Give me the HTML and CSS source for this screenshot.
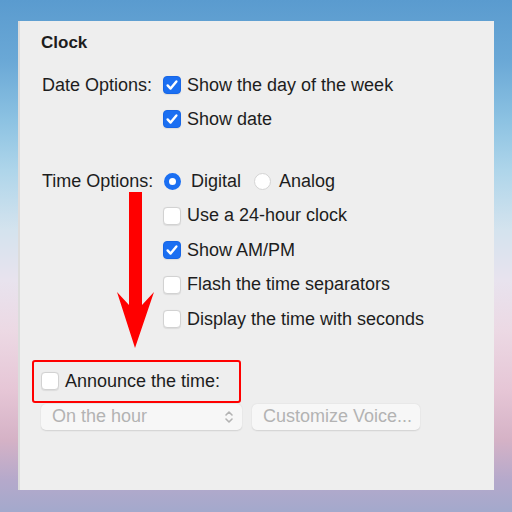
FILE: index.html
```html
<!DOCTYPE html>
<html>
<head>
<meta charset="utf-8">
<link rel="stylesheet" href="styles.css">
</head>
<body>
<div class="panel">
  <div class="title">Clock</div>
  <div class="group group-date">
    <div class="label">Date Options:</div>
    <div class="opt"><span class="cb on"><svg viewBox="0 0 18 18"><path d="M4.6 9.4 L7.6 12.6 L13.4 5.4" /></svg></span>Show the day of the week</div>
    <div class="label"></div>
    <div class="opt"><span class="cb on"><svg viewBox="0 0 18 18"><path d="M4.6 9.4 L7.6 12.6 L13.4 5.4" /></svg></span>Show date</div>
  </div>
  <div class="group group-time">
    <div class="label">Time Options:</div>
    <div class="opt"><span class="radio on"></span><span class="rtext">Digital</span><span class="radio"></span><span>Analog</span></div>
    <div class="label"></div>
    <div class="opt"><span class="cb"></span>Use a 24-hour clock</div>
    <div class="label"></div>
    <div class="opt"><span class="cb on"><svg viewBox="0 0 18 18"><path d="M4.6 9.4 L7.6 12.6 L13.4 5.4" /></svg></span>Show AM/PM</div>
    <div class="label"></div>
    <div class="opt"><span class="cb"></span>Flash the time separators</div>
    <div class="label"></div>
    <div class="opt"><span class="cb"></span>Display the time with seconds</div>
  </div>
  <div class="highlight"><span class="cb"></span>Announce the time:</div>
  <div class="controls">
    <div class="popup"><span>On the hour</span><svg class="chev" viewBox="0 0 10 16"><path d="M2 6 L5 3 L8 6 M2 10 L5 13 L8 10" /></svg></div>
    <div class="button">Customize Voice...</div>
  </div>
  <svg class="arrow" viewBox="0 0 40 160" width="40" height="160"><polygon points="12,0 25,0 25,113 37,100 18,156 0,100 12,113" /></svg>
</div>
</body>
</html>
```

FILE: styles.css
```css
html, body {
  margin: 0;
  padding: 0;
}
body {
  width: 512px;
  height: 512px;
  overflow: hidden;
  font-family: "Liberation Sans", Arial, sans-serif;
  color: #1d1d1d;
  background: linear-gradient(180deg, #5a9bcf 0px, #6aa8d6 60px, #8cc2e2 120px, #aed5ea 170px, #d4e3ee 230px, #e8e3ee 280px, #ecd9e4 330px, #e6c6d6 390px, #d5b2c6 440px, #b5a9cb 480px, #a3a9cc 512px);
  padding-top: 21px;
  box-sizing: border-box;
}
.panel {
  position: relative;
  margin-left: 18px;
  width: 476px;
  height: 469px;
  background: #eeeeee;
  border-left: 2px solid #dcdcdc;
  box-sizing: border-box;
  padding: 11px 0 0 21px;
}
.title {
  font-weight: bold;
  font-size: 17px;
  line-height: 22px;
}
.group {
  display: grid;
  grid-template-columns: 122px auto;
  font-size: 18px;
}
.group-date {
  margin-top: 14px;
  grid-auto-rows: 34px;
}
.group-time {
  margin-top: 28px;
  grid-auto-rows: 34.5px;
}
.label {
  display: flex;
  align-items: center;
  padding-left: 1px;
}
.opt {
  display: flex;
  align-items: center;
  white-space: nowrap;
}
.cb {
  width: 18px;
  height: 18px;
  box-sizing: border-box;
  border-radius: 4px;
  background: #ffffff;
  border: 1px solid #d2d2d2;
  box-shadow: 0 0.5px 1px rgba(0,0,0,0.08);
  margin-right: 6px;
  flex: none;
  display: inline-flex;
}
.cb.on {
  background: #1b6ff2;
  border-color: #1766e6;
}
.cb svg {
  width: 18px;
  height: 18px;
  margin: -1px;
  fill: none;
  stroke: #ffffff;
  stroke-width: 2.4;
  stroke-linecap: round;
  stroke-linejoin: round;
}
.radio {
  width: 17px;
  height: 17px;
  box-sizing: border-box;
  border-radius: 50%;
  background: #ffffff;
  border: 1px solid #d4d4d4;
  margin-right: 8px;
  flex: none;
}
.radio.on {
  margin-left: 1px;
  margin-right: 10px;
  background: #ffffff;
  border: 5.5px solid #1b6ff2;
}
.rtext {
  margin-right: 13px;
}
.highlight {
  margin-top: 23px;
  margin-left: -9px;
  width: 209px;
  height: 43px;
  box-sizing: border-box;
  border: 2px solid #ff0000;
  border-radius: 3px;
  display: flex;
  align-items: center;
  padding-left: 7px;
  font-size: 18px;
}
.controls {
  display: flex;
  gap: 10px;
  margin-top: 1px;
  font-size: 18px;
  color: #b3b3b3;
}
.popup, .button {
  height: 26px;
  box-sizing: border-box;
  background: #f7f7f7;
  border-radius: 5px;
  box-shadow: 0 0.5px 1.5px rgba(0,0,0,0.12);
  display: flex;
  align-items: center;
}
.popup {
  width: 201px;
  padding: 0 8px 0 11px;
  justify-content: space-between;
}
.button {
  width: 168px;
  padding-left: 11px;
}
.chev {
  width: 10px;
  height: 16px;
  fill: none;
  stroke: #b3b3b3;
  stroke-width: 1.6;
  stroke-linecap: round;
  stroke-linejoin: round;
}
.arrow {
  position: absolute;
  left: 97px;
  top: 171px;
  fill: #ff0000;
}
```
